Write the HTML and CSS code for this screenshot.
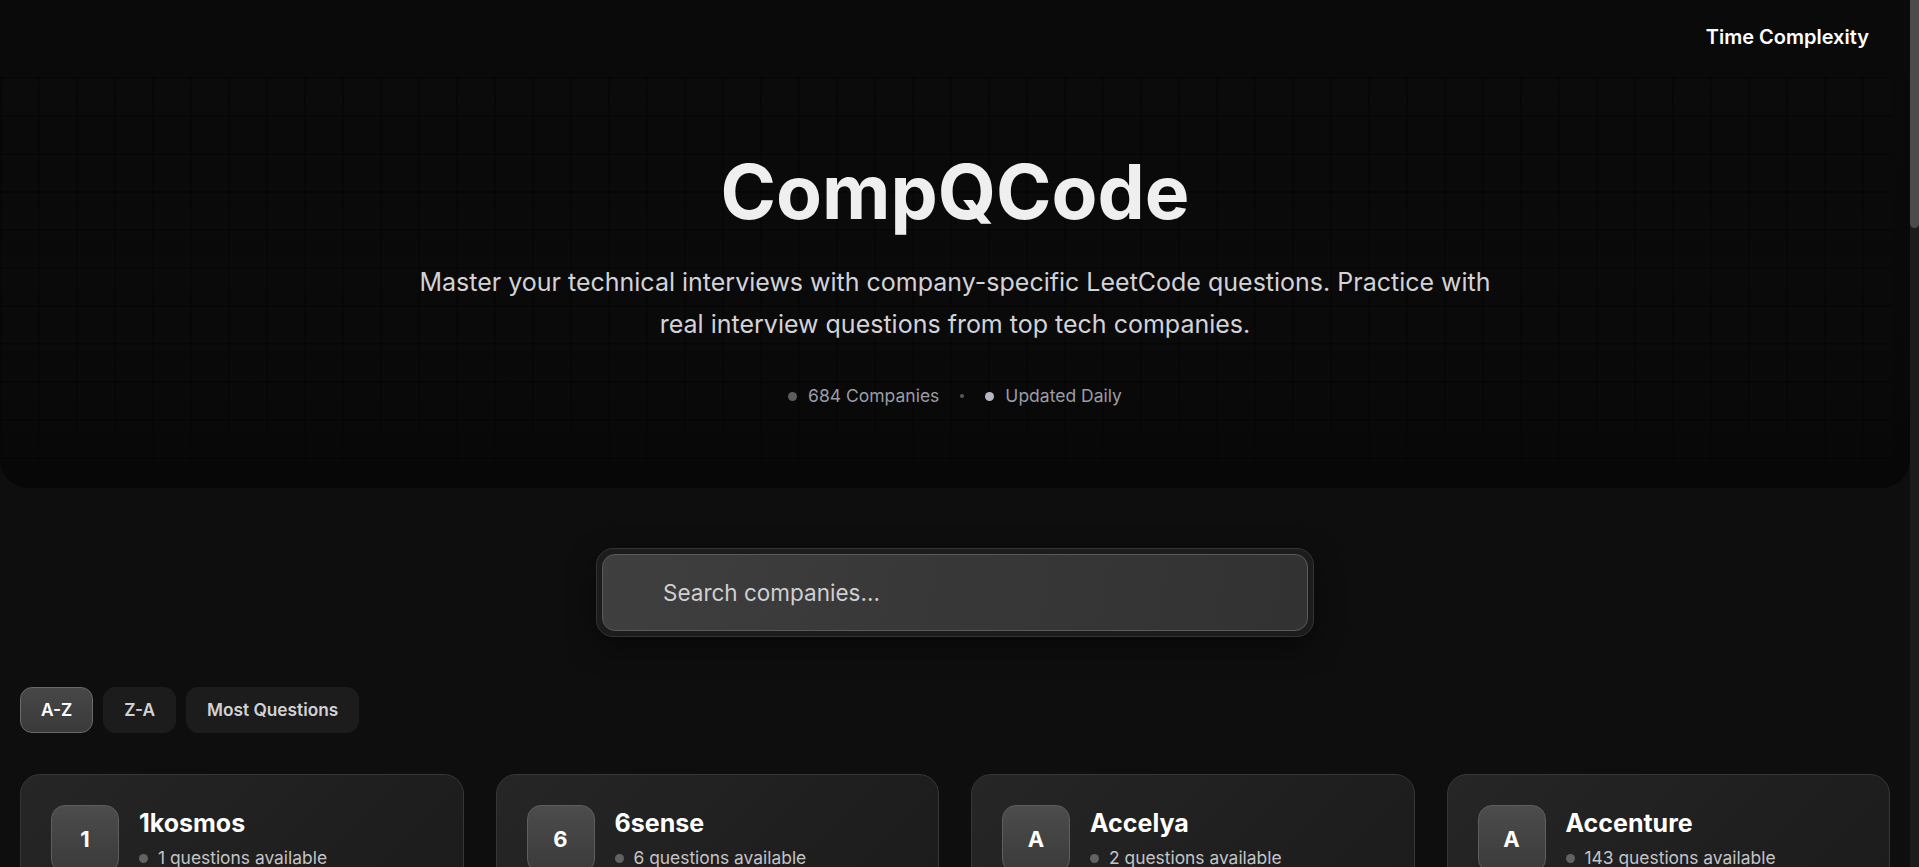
FILE: index.html
```html
<!DOCTYPE html>
<html lang="en">
<head>
<meta charset="utf-8">
<title>CompQCode</title>
<link rel="stylesheet" href="styles.css">
</head>
<body>
<div class="scrollbar"><div class="scroll-thumb"></div></div>
<header class="hero">
  <nav class="nav"><a class="nav-link" href="#">Time Complexity</a></nav>
  <div class="hero-content">
    <h1 class="title">CompQCode</h1>
    <p class="subtitle">Master your technical interviews with company-specific LeetCode questions. Practice with real interview questions from top tech companies.</p>
    <div class="stats">
      <span class="stat"><span class="dot dot-dim"></span>684 Companies</span>
      <span class="sep"></span>
      <span class="stat"><span class="dot dot-light"></span>Updated Daily</span>
    </div>
  </div>
</header>

<main class="main">
  <div class="search-wrap">
    <div class="search-ring">
      <input class="search" type="text" placeholder="Search companies...">
    </div>
  </div>

  <div class="sort">
    <button class="sort-btn active">A-Z</button>
    <button class="sort-btn">Z-A</button>
    <button class="sort-btn">Most Questions</button>
  </div>

  <div class="grid">
    <div class="card"><div class="avatar">1</div><div class="info"><div class="name">1kosmos</div><div class="count"><span class="cdot"></span>1 questions available</div></div></div>
    <div class="card"><div class="avatar">6</div><div class="info"><div class="name">6sense</div><div class="count"><span class="cdot"></span>6 questions available</div></div></div>
    <div class="card"><div class="avatar">A</div><div class="info"><div class="name">Accelya</div><div class="count"><span class="cdot"></span>2 questions available</div></div></div>
    <div class="card"><div class="avatar">A</div><div class="info"><div class="name">Accenture</div><div class="count"><span class="cdot"></span>143 questions available</div></div></div>
    <div class="card"><div class="avatar">A</div><div class="info"><div class="name">Accolite</div><div class="count"><span class="cdot"></span>24 questions available</div></div></div>
    <div class="card"><div class="avatar">A</div><div class="info"><div class="name">Acko</div><div class="count"><span class="cdot"></span>11 questions available</div></div></div>
    <div class="card"><div class="avatar">A</div><div class="info"><div class="name">Activision</div><div class="count"><span class="cdot"></span>9 questions available</div></div></div>
    <div class="card"><div class="avatar">A</div><div class="info"><div class="name">Adobe</div><div class="count"><span class="cdot"></span>412 questions available</div></div></div>
    <div class="card"><div class="avatar">A</div><div class="info"><div class="name">Affirm</div><div class="count"><span class="cdot"></span>18 questions available</div></div></div>
    <div class="card"><div class="avatar">A</div><div class="info"><div class="name">Agoda</div><div class="count"><span class="cdot"></span>37 questions available</div></div></div>
    <div class="card"><div class="avatar">A</div><div class="info"><div class="name">Airbnb</div><div class="count"><span class="cdot"></span>64 questions available</div></div></div>
    <div class="card"><div class="avatar">A</div><div class="info"><div class="name">Airtel</div><div class="count"><span class="cdot"></span>7 questions available</div></div></div>
    <div class="card"><div class="avatar">A</div><div class="info"><div class="name">Akamai</div><div class="count"><span class="cdot"></span>12 questions available</div></div></div>
    <div class="card"><div class="avatar">A</div><div class="info"><div class="name">Akuna Capital</div><div class="count"><span class="cdot"></span>21 questions available</div></div></div>
    <div class="card"><div class="avatar">A</div><div class="info"><div class="name">Alibaba</div><div class="count"><span class="cdot"></span>15 questions available</div></div></div>
    <div class="card"><div class="avatar">A</div><div class="info"><div class="name">Amazon</div><div class="count"><span class="cdot"></span>1386 questions available</div></div></div>
    <div class="card"><div class="avatar">A</div><div class="info"><div class="name">AMD</div><div class="count"><span class="cdot"></span>10 questions available</div></div></div>
    <div class="card"><div class="avatar">A</div><div class="info"><div class="name">American Express</div><div class="count"><span class="cdot"></span>45 questions available</div></div></div>
    <div class="card"><div class="avatar">A</div><div class="info"><div class="name">Amdocs</div><div class="count"><span class="cdot"></span>8 questions available</div></div></div>
    <div class="card"><div class="avatar">A</div><div class="info"><div class="name">Apple</div><div class="count"><span class="cdot"></span>356 questions available</div></div></div>
    <div class="card"><div class="avatar">A</div><div class="info"><div class="name">Arcesium</div><div class="count"><span class="cdot"></span>29 questions available</div></div></div>
    <div class="card"><div class="avatar">A</div><div class="info"><div class="name">Arista Networks</div><div class="count"><span class="cdot"></span>19 questions available</div></div></div>
    <div class="card"><div class="avatar">A</div><div class="info"><div class="name">Atlassian</div><div class="count"><span class="cdot"></span>58 questions available</div></div></div>
    <div class="card"><div class="avatar">A</div><div class="info"><div class="name">Autodesk</div><div class="count"><span class="cdot"></span>14 questions available</div></div></div>
    <div class="card"><div class="avatar">A</div><div class="info"><div class="name">Avalara</div><div class="count"><span class="cdot"></span>6 questions available</div></div></div>
    <div class="card"><div class="avatar">B</div><div class="info"><div class="name">Baidu</div><div class="count"><span class="cdot"></span>5 questions available</div></div></div>
    <div class="card"><div class="avatar">B</div><div class="info"><div class="name">Bank of America</div><div class="count"><span class="cdot"></span>13 questions available</div></div></div>
    <div class="card"><div class="avatar">B</div><div class="info"><div class="name">Barclays</div><div class="count"><span class="cdot"></span>16 questions available</div></div></div>
    <div class="card"><div class="avatar">B</div><div class="info"><div class="name">BlackRock</div><div class="count"><span class="cdot"></span>33 questions available</div></div></div>
    <div class="card"><div class="avatar">B</div><div class="info"><div class="name">Bloomberg</div><div class="count"><span class="cdot"></span>421 questions available</div></div></div>
    <div class="card"><div class="avatar">B</div><div class="info"><div class="name">Bolt</div><div class="count"><span class="cdot"></span>9 questions available</div></div></div>
    <div class="card"><div class="avatar">B</div><div class="info"><div class="name">Booking.com</div><div class="count"><span class="cdot"></span>27 questions available</div></div></div>
    <div class="card"><div class="avatar">B</div><div class="info"><div class="name">Bosch</div><div class="count"><span class="cdot"></span>4 questions available</div></div></div>
    <div class="card"><div class="avatar">B</div><div class="info"><div class="name">Box</div><div class="count"><span class="cdot"></span>8 questions available</div></div></div>
    <div class="card"><div class="avatar">B</div><div class="info"><div class="name">Brex</div><div class="count"><span class="cdot"></span>7 questions available</div></div></div>
    <div class="card"><div class="avatar">B</div><div class="info"><div class="name">ByteDance</div><div class="count"><span class="cdot"></span>96 questions available</div></div></div>
    <div class="card"><div class="avatar">C</div><div class="info"><div class="name">Capgemini</div><div class="count"><span class="cdot"></span>22 questions available</div></div></div>
    <div class="card"><div class="avatar">C</div><div class="info"><div class="name">Capital One</div><div class="count"><span class="cdot"></span>41 questions available</div></div></div>
    <div class="card"><div class="avatar">C</div><div class="info"><div class="name">Cisco</div><div class="count"><span class="cdot"></span>88 questions available</div></div></div>
    <div class="card"><div class="avatar">C</div><div class="info"><div class="name">Citadel</div><div class="count"><span class="cdot"></span>52 questions available</div></div></div>
    <div class="card"><div class="avatar">C</div><div class="info"><div class="name">Citrix</div><div class="count"><span class="cdot"></span>11 questions available</div></div></div>
    <div class="card"><div class="avatar">C</div><div class="info"><div class="name">Cloudflare</div><div class="count"><span class="cdot"></span>10 questions available</div></div></div>
    <div class="card"><div class="avatar">C</div><div class="info"><div class="name">Cognizant</div><div class="count"><span class="cdot"></span>31 questions available</div></div></div>
    <div class="card"><div class="avatar">C</div><div class="info"><div class="name">Coinbase</div><div class="count"><span class="cdot"></span>19 questions available</div></div></div>
    <div class="card"><div class="avatar">C</div><div class="info"><div class="name">Coupang</div><div class="count"><span class="cdot"></span>12 questions available</div></div></div>
    <div class="card"><div class="avatar">C</div><div class="info"><div class="name">Criteo</div><div class="count"><span class="cdot"></span>6 questions available</div></div></div>
    <div class="card"><div class="avatar">D</div><div class="info"><div class="name">Databricks</div><div class="count"><span class="cdot"></span>23 questions available</div></div></div>
    <div class="card"><div class="avatar">D</div><div class="info"><div class="name">Deloitte</div><div class="count"><span class="cdot"></span>17 questions available</div></div></div>
    <div class="card"><div class="avatar">D</div><div class="info"><div class="name">DE Shaw</div><div class="count"><span class="cdot"></span>44 questions available</div></div></div>
    <div class="card"><div class="avatar">D</div><div class="info"><div class="name">Dell</div><div class="count"><span class="cdot"></span>9 questions available</div></div></div>
    <div class="card"><div class="avatar">D</div><div class="info"><div class="name">Directi</div><div class="count"><span class="cdot"></span>14 questions available</div></div></div>
    <div class="card"><div class="avatar">D</div><div class="info"><div class="name">DoorDash</div><div class="count"><span class="cdot"></span>61 questions available</div></div></div>
    <div class="card"><div class="avatar">D</div><div class="info"><div class="name">Dropbox</div><div class="count"><span class="cdot"></span>28 questions available</div></div></div>
    <div class="card"><div class="avatar">D</div><div class="info"><div class="name">Dunzo</div><div class="count"><span class="cdot"></span>5 questions available</div></div></div>
    <div class="card"><div class="avatar">E</div><div class="info"><div class="name">eBay</div><div class="count"><span class="cdot"></span>39 questions available</div></div></div>
    <div class="card"><div class="avatar">E</div><div class="info"><div class="name">Electronic Arts</div><div class="count"><span class="cdot"></span>12 questions available</div></div></div>
    <div class="card"><div class="avatar">E</div><div class="info"><div class="name">Epic Systems</div><div class="count"><span class="cdot"></span>18 questions available</div></div></div>
    <div class="card"><div class="avatar">E</div><div class="info"><div class="name">Expedia</div><div class="count"><span class="cdot"></span>47 questions available</div></div></div>
    <div class="card"><div class="avatar">F</div><div class="info"><div class="name">FactSet</div><div class="count"><span class="cdot"></span>13 questions available</div></div></div>
    <div class="card"><div class="avatar">F</div><div class="info"><div class="name">Flipkart</div><div class="count"><span class="cdot"></span>102 questions available</div></div></div>
  </div>
</main>
</body>
</html>
```

FILE: styles.css
```css
* { box-sizing: border-box; }

html {
  background: #0e0e0e;
  scrollbar-width: none;
}
html::-webkit-scrollbar { display: none; }

body {
  margin: 0;
  padding-right: 9px;
  background: #0e0e0e;
  font-family: Inter, "Noto Sans", "Liberation Sans", sans-serif;
  color: #f2f2f2;
}

/* fake dark scrollbar, overlaid on the right edge */
.scrollbar {
  position: fixed;
  top: 0;
  right: 0;
  bottom: 0;
  width: 9px;
  background: #1c1c1c;
  z-index: 10;
}
.scroll-thumb {
  height: 228px;
  background: #4b4b4b;
  border-radius: 0 0 5px 5px;
}

/* ---------- hero ---------- */
.hero {
  position: relative;
  background: linear-gradient(180deg, #0a0a0a 0%, #090909 60%, #070707 100%);
  border-radius: 0 0 28px 28px;
  overflow: hidden;
}

.hero::before {
  content: "";
  position: absolute;
  top: 77px;
  left: 0;
  right: 18px;
  bottom: 26px;
  background-image:
    linear-gradient(to right, rgba(0,0,0,0.4) 2px, transparent 2px),
    linear-gradient(to bottom, rgba(0,0,0,0.4) 2px, transparent 2px);
  background-color: #0b0b0b;
  background-size: 38px 38px;
  -webkit-mask-image: linear-gradient(180deg, rgba(0,0,0,0.8) 0%, rgba(0,0,0,0.6) 70%, rgba(0,0,0,0.35) 100%);
  mask-image: linear-gradient(180deg, rgba(0,0,0,0.8) 0%, rgba(0,0,0,0.6) 70%, rgba(0,0,0,0.35) 100%);
  pointer-events: none;
}

.nav {
  position: relative;
  height: 73px;
  display: flex;
  justify-content: flex-end;
  align-items: center;
  padding-right: 41px;
}

.nav-link {
  color: #ffffff;
  text-decoration: none;
  font-size: 20px;
  font-weight: 600;
  line-height: 28px;
}

.hero-content {
  position: relative;
  display: flex;
  flex-direction: column;
  align-items: center;
  padding: 82px 20px 79px;
  text-align: center;
}

.title {
  margin: 0;
  font-size: 75px;
  line-height: 74px;
  font-weight: 700;
  color: #efefef;
}

.subtitle {
  margin: 32px 0 0;
  max-width: 1100px;
  font-size: 25px;
  line-height: 42px;
  color: #d2d3d8;
  font-weight: 400;
}

.stats {
  margin-top: 38px;
  display: flex;
  align-items: center;
  gap: 21px;
  font-size: 17.5px;
  line-height: 26px;
  color: #9b9da6;
}

.stat {
  display: flex;
  align-items: center;
  gap: 11px;
}

.dot {
  width: 9px;
  height: 9px;
  border-radius: 50%;
}
.dot-dim { background: #5d5d5f; }
.dot-light { background: #b5b8bf; }

.sep {
  width: 4px;
  height: 4px;
  border-radius: 50%;
  background: #5a5a5c;
}

/* ---------- main ---------- */
.main {
  padding: 60px 20px 60px;
}

.search-wrap {
  display: flex;
  justify-content: center;
}

.search-ring {
  width: 718px;
  padding: 5px;
  border-radius: 17px;
  background: #1c1c1c;
  border: 1px solid #343434;
  box-shadow: 0 10px 30px rgba(0,0,0,0.45);
}

.search {
  display: block;
  width: 100%;
  height: 77px;
  border-radius: 13px;
  border: 1px solid #5a5a5a;
  background: linear-gradient(100deg, #3f3f3f 0%, #383838 45%, #323232 100%);
  padding: 0 20px 0 60px;
  font-family: Inter, "Noto Sans", "Liberation Sans", sans-serif;
  font-size: 22.5px;
  color: #e6e6e6;
  outline: none;
}
.search::placeholder { color: #cfcfd2; }

.sort {
  margin-top: 50px;
  display: flex;
  gap: 10px;
}

.sort-btn {
  font-family: Inter, "Noto Sans", "Liberation Sans", sans-serif;
  font-size: 17.3px;
  font-weight: 600;
  line-height: 24px;
  padding: 10px 20px;
  border-radius: 12px;
  border: 1px solid #1c1c1c;
  background: #1c1c1c;
  color: #d2d2d4;
  cursor: pointer;
}

.sort-btn.active {
  background: linear-gradient(180deg, #474747 0%, #3a3a3a 100%);
  border-color: #6a6a6a;
  color: #ffffff;
}

.grid {
  margin-top: 41px;
  display: grid;
  grid-template-columns: repeat(4, 1fr);
  gap: 32px;
}

.card {
  display: flex;
  align-items: center;
  gap: 20px;
  padding: 30px;
  border-radius: 20px;
  border: 1px solid #363636;
  background: linear-gradient(135deg, #262626 0%, #1f1f1f 60%, #1c1c1c 100%);
}

.avatar {
  flex: none;
  width: 68px;
  height: 68px;
  border-radius: 14px;
  border: 1px solid #5e5e5e;
  background: linear-gradient(180deg, #4c4c4c 0%, #3a3a3a 100%);
  display: flex;
  align-items: center;
  justify-content: center;
  font-size: 22px;
  font-weight: 700;
  color: #ffffff;
}

.info {
  display: flex;
  flex-direction: column;
  gap: 6px;
}

.name {
  font-size: 25px;
  line-height: 32px;
  font-weight: 700;
  color: #ffffff;
}

.count {
  display: flex;
  align-items: center;
  gap: 10px;
  font-size: 17.4px;
  line-height: 26px;
  color: #c4c4c6;
}

.cdot {
  width: 9px;
  height: 9px;
  border-radius: 50%;
  background: #626262;
}
```
